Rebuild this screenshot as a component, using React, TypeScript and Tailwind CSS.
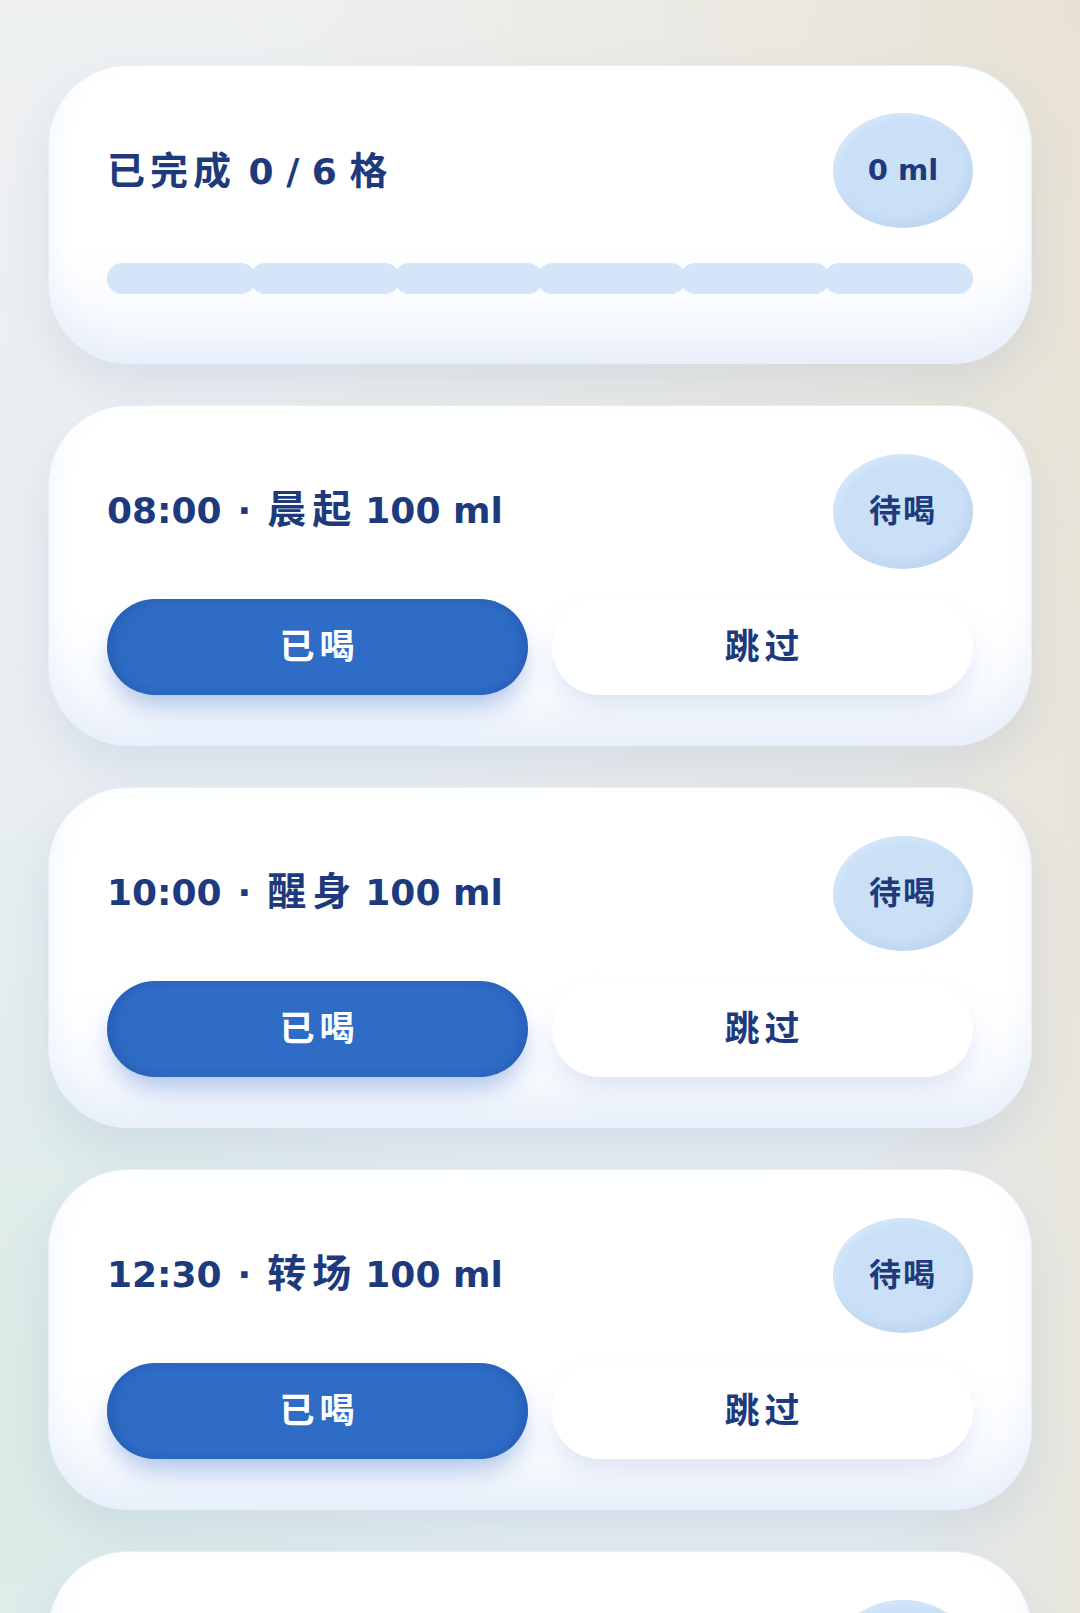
import React from 'react';

interface Slot {
  time: string;
  label: string;
  amount: number;
}

const slots: Slot[] = [
  { time: '08:00', label: '晨起', amount: 100 },
  { time: '10:00', label: '醒身', amount: 100 },
  { time: '12:30', label: '转场', amount: 100 },
  { time: '15:00', label: '午后', amount: 100 },
];

const TOTAL = 6;

const latin = "font-['DejaVu_Sans','Noto_Sans_CJK_SC',sans-serif]";
const cjk = "font-['Noto_Sans_CJK_SC',sans-serif]";

const cardClass =
  'w-full rounded-[80px] border border-[#e8eef8] bg-[linear-gradient(180deg,#ffffff_0%,#ffffff_60%,#f3f7fd_100%)] shadow-[0_22px_44px_rgba(140,160,195,0.2),inset_0_-20px_30px_rgba(214,227,247,0.38)]';

const Badge = ({ children }: { children: React.ReactNode }) => (
  <div className="flex h-[115px] w-[140px] shrink-0 items-center justify-center rounded-[50%] bg-[#c9e0f7] shadow-[inset_-4px_-6px_10px_rgba(160,188,225,0.28),inset_3px_3px_8px_rgba(255,255,255,0.3)]">
    {children}
  </div>
);

const SummaryCard = ({ done }: { done: number }) => (
  <div className={`${cardClass} px-[58px] pt-[47px] pb-[69px]`}>
    <div className="flex items-center justify-between">
      <h2 className="pb-[2px] text-[#1d3a7d] font-bold leading-none">
        <span className={`${cjk} text-[38px] tracking-[5px]`}>已完成</span>
        <span className={`${latin} text-[36px]`}> {done} / {TOTAL} </span>
        <span className={`${cjk} text-[38px]`}>格</span>
      </h2>
      <Badge>
        <span className={`${latin} text-[29px] font-bold text-[#1d3a7d]`}>0 ml</span>
      </Badge>
    </div>
    {/* progress track, one segment per slot */}
    <div className="mt-[35px] flex h-[31px]">
      {Array.from({ length: TOTAL }).map((_, i) => (
        <div
          key={i}
          className={`h-full flex-1 rounded-full bg-[#d5e5f9] ${i > 0 ? '-ml-[6px]' : ''}`}
        />
      ))}
    </div>
  </div>
);

const SlotCard = ({ slot }: { slot: Slot }) => (
  <div className={`${cardClass} px-[58px] pt-[48px] pb-[50px]`}>
    <div className="flex items-center justify-between">
      <h3 className="pb-[8px] text-[#1d3a7d] font-bold leading-none">
        <span className={`${latin} text-[36px]`}>{slot.time}</span>
        <span className={`${latin} mx-[16px] text-[36px]`}>·</span>
        <span className={`${cjk} text-[39px] tracking-[6px]`}>{slot.label}</span>
        <span className={`${latin} ml-[8px] text-[36px]`}>{slot.amount} ml</span>
      </h3>
      <Badge>
        <span className={`${cjk} pb-[7px] text-[32px] font-bold tracking-[2px] text-[#1d3a7d]`}>待喝</span>
      </Badge>
    </div>
    <div className="mt-[30px] grid h-[96px] grid-cols-2 gap-[24px]">
      <button
        type="button"
        className={`${cjk} flex items-center justify-center rounded-full bg-[#2f6cc6] pb-[5px] pl-[4px] text-[35px] font-bold tracking-[5px] text-white shadow-[0_16px_26px_-6px_rgba(45,100,200,0.38),inset_10px_0_14px_-6px_rgba(20,55,130,0.32),inset_-10px_0_14px_-6px_rgba(20,55,130,0.32)]`}
      >
        已喝
      </button>
      <button
        type="button"
        className={`${cjk} flex items-center justify-center rounded-full bg-white pb-[5px] pl-[4px] text-[35px] font-bold tracking-[5px] text-[#1d3a7d] shadow-[0_16px_26px_-4px_rgba(180,198,230,0.38)]`}
      >
        跳过
      </button>
    </div>
  </div>
);

export default function App() {
  const done = 0;

  return (
    <div className="h-screen overflow-hidden bg-[#eceff1] bg-[radial-gradient(ellipse_at_0%_88%,#dbebe6_0%,transparent_35%),linear-gradient(90deg,transparent_80%,rgba(232,226,212,0.7)_100%),radial-gradient(ellipse_at_100%_0%,#e8e3d6_0%,transparent_55%),linear-gradient(180deg,#eef0f1_0%,#e9eef3_55%,#e5eef3_100%)]">
      <div className="flex flex-col gap-[41px] px-[48px] pt-[65px]">
        <SummaryCard done={done} />
        {slots.map((slot) => (
          <SlotCard key={slot.time} slot={slot} />
        ))}
      </div>
    </div>
  );
}
